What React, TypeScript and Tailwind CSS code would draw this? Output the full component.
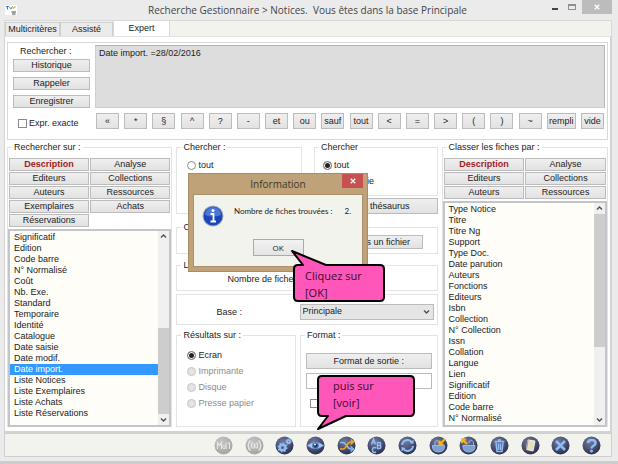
import type { ReactNode } from "react";

const operators = ["«", "*", "§", "^", "?", "-", "et", "ou", "sauf", "tout", "<", "=", ">", "(", ")", "~"];

const searchFields = [
  "Significatif", "Edition", "Code barre", "N° Normalisé", "Coût", "Nb. Exe.", "Standard", "Temporaire",
  "Identité", "Catalogue", "Date saisie", "Date modif.", "Date import.", "Liste Notices",
  "Liste Exemplaires", "Liste Achats", "Liste Réservations",
];

const sortFields = [
  "Type Notice", "Titre", "Titre Ng", "Support", "Type Doc.", "Date parution", "Auteurs", "Fonctions",
  "Editeurs", "Isbn", "Collection", "N° Collection", "Issn", "Collation", "Langue", "Lien",
  "Significatif", "Edition", "Code barre", "N° Normalisé", "Coût",
];

function Btn({ children, className = "" }: { children: ReactNode; className?: string }) {
  return (
    <button
      type="button"
      className={`flex items-center justify-center whitespace-nowrap border border-[#bcbcbc] bg-linear-to-b from-[#efefef] to-[#e2e2e2] leading-none ${className}`}
    >
      {children}
    </button>
  );
}

function Group({ title, children, className = "" }: { title: string; children?: ReactNode; className?: string }) {
  return (
    <fieldset className={`min-w-0 border border-[#e4e4e4] ${className}`}>
      <legend className="ml-1 px-0.5 leading-3">{title}</legend>
      {children}
    </fieldset>
  );
}

function Radio({ name, label, checked, disabled }: { name: string; label: string; checked?: boolean; disabled?: boolean }) {
  return (
    <label className={`flex h-4 items-center gap-0.5 ${disabled ? "text-[#8c8c8c]" : ""}`}>
      <input
        type="radio"
        name={name}
        defaultChecked={checked}
        disabled={disabled}
        className="size-[9px] shrink-0 appearance-none rounded-full border border-[#8a8a8a] bg-white checked:bg-[#222] checked:shadow-[inset_0_0_0_1px_white] disabled:border-[#c4c4c4] disabled:bg-[#e4e4e4]"
      />
      {label}
    </label>
  );
}

function Arrow({ down }: { down?: boolean }) {
  return (
    <svg viewBox="0 0 11 11" className="size-[11px] shrink-0">
      <path d={down ? "M3 4.5 5.5 7 8 4.5" : "M3 6.5 5.5 4 8 6.5"} fill="none" stroke="#505050" strokeWidth="1.4" />
    </svg>
  );
}

function ListBox({ label, items, selected, bottom }: { label: string; items: string[]; selected?: string; bottom?: boolean }) {
  return (
    <div className="flex h-0 grow border-2 border-[#c3c5cb] bg-[#fefdf8]">
      <select
        aria-label={label}
        size={20}
        defaultValue={selected}
        className="h-full min-w-0 grow appearance-none overflow-hidden bg-transparent py-px outline-none"
      >
        {items.map((item) => (
          <option
            key={item}
            className="block h-[11px] min-h-0 p-0 pl-1 leading-[11px] checked:bg-linear-to-r checked:from-[#3399ff] checked:to-[#3399ff] checked:[-webkit-text-fill-color:white]"
          >
            {item}
          </option>
        ))}
      </select>
      <div className="flex w-[11px] shrink-0 flex-col bg-[#f0f0f0]">
        <Arrow />
        <div className={`flex grow flex-col ${bottom ? "justify-end" : ""}`}>
          <div className={`bg-[#cdcdcd] ${bottom ? "h-1/2" : "h-2/3"}`} />
        </div>
        <Arrow down />
      </div>
    </div>
  );
}

function Orb({ label, disabled, children }: { label: string; disabled?: boolean; children: ReactNode }) {
  return (
    <button type="button" aria-label={label} disabled={disabled} className="size-[19px]">
      <svg viewBox="0 0 38 38" className="size-full" fill="none" stroke={disabled ? "#e6e6e6" : "#8fbcf5"} strokeWidth="3">
        <circle cx="19" cy="19" r="18" fill={disabled ? "url(#orbGrey)" : "url(#orbBlue)"} stroke="none" />
        {children}
      </svg>
    </button>
  );
}

function Toolbar() {
  return (
    <div className="flex h-6 items-center justify-end border border-[#cfcfcf] bg-[#f3f3ee] pr-2.5">
      <svg className="size-0" aria-hidden="true">
        <defs>
          <radialGradient id="orbBlue" cx="0.4" cy="0.3" r="0.75">
            <stop offset="0" stopColor="#737a9c" />
            <stop offset="0.6" stopColor="#464d6e" />
            <stop offset="1" stopColor="#262b45" />
          </radialGradient>
          <radialGradient id="orbGrey" cx="0.4" cy="0.3" r="0.75">
            <stop offset="0" stopColor="#c4c4c4" />
            <stop offset="1" stopColor="#a2a2a2" />
          </radialGradient>
        </defs>
      </svg>
      <div className="flex w-[387px] justify-between">
        <Orb label="Mots" disabled>
          <path d="M7 26V13l4 6 4-6v13M24 13v13M31 13v13M28 15l3-2" strokeWidth="2.4" />
          <circle cx="20" cy="22" r="3" strokeWidth="2" />
        </Orb>
        <Orb label="Diffuser" disabled>
          <path d="M11 9c-6 5-6 15 0 20M27 9c6 5 6 15 0 20M15 13c-3 3-3 9 0 12M23 13c3 3 3 9 0 12" />
          <path d="M19 15v10" strokeWidth="4" />
        </Orb>
        <Orb label="Paramètres">
          <circle cx="15" cy="23" r="5.5" strokeWidth="5" />
          <circle cx="15" cy="23" r="8.5" strokeDasharray="3.3 3.3" />
          <circle cx="27" cy="11" r="3" strokeWidth="4" />
          <circle cx="27" cy="11" r="5.5" strokeWidth="2" strokeDasharray="2.4 2.3" />
        </Orb>
        <Orb label="Voir">
          <path d="M3 19q16-12 32 0q-16 12-32 0Z" fill="#a9c9f2" strokeWidth="1.5" />
          <circle cx="19" cy="19" r="5.500" fill="#26305a" stroke="#4f7fd0" strokeWidth="2.5" />
          <circle cx="18" cy="17" r="1.8" fill="white" stroke="none" />
        </Orb>
        <Orb label="Mélanger">
          <path d="M6 13h6c7 0 8 13 15 13h5" />
          <path d="M6 26h6c8 0 7-14 15-14h5M27 7l6 5-6 5" stroke="#f2a922" />
          <path d="m27 21 6 5-6 5" />
        </Orb>
        <Orb label="Alphabet">
          <path d="m9 17 4-11 4 11M10 13h6M21 13v12h4q4-1 2-6h-6 4q4-1 1-6ZM18 24q-7-3-7 4t7 4" />
        </Orb>
        <Orb label="Actualiser">
          <path d="M8 18a11 11 0 0 1 20-5M30 20a11 11 0 0 1-20 5" strokeWidth="4" />
          <path d="m23 14 8 2 0-9ZM15 24l-8-2 0 9Z" fill="#8fbcf5" stroke="none" />
        </Orb>
        <Orb label="Déposer au panier">
          <path d="M7 19h24q1 13-12 13T7 19Z" fill="#7f9fd0" strokeWidth="2" />
          <path d="M12 19C10 8 18 5 18 13" strokeWidth="2" />
          <path d="M32 6 22 16M21 9v8h8" stroke="#f5b51c" strokeWidth="4" />
        </Orb>
        <Orb label="Retirer du panier">
          <path d="M8 19h24q1 13-12 13T8 19Z" fill="#7f9fd0" strokeWidth="2" />
          <path d="M29 18C30 7 21 5 20 14" strokeWidth="2" />
          <path d="M6 7l10 9M6 14V7h8" stroke="#f5b51c" strokeWidth="4" />
        </Orb>
        <Orb label="Supprimer">
          <path d="M9 11h20M16 8h6M12 13l2 18h10l2-18M17 15v13M21 15v13" />
        </Orb>
        <Orb label="Effacer">
          <path d="m14 8 14 2-4 20-13-3Z" fill="#e6dfc4" stroke="#f4f0dc" strokeWidth="2" />
          <path d="m14 8-3 19" stroke="#a39a7c" strokeWidth="2" />
        </Orb>
        <Orb label="Fermer">
          <path d="m10 10 18 18M28 10 10 28" strokeWidth="5" />
        </Orb>
        <Orb label="Aide">
          <path d="M12 14c0-8 15-8 15 0 0 6-8 5-8 11" strokeWidth="5" />
          <circle cx="19" cy="30" r="1.5" />
        </Orb>
      </div>
    </div>
  );
}

function CategoryButtons({ items }: { items: string[] }) {
  return (
    <div className="grid grid-cols-2 gap-px px-px">
      {items.map((item, i) => (
        <Btn key={item} className={`h-[13px] ${i === 0 ? "font-bold text-[#a01c1c]" : ""}`}>
          {item}
        </Btn>
      ))}
    </div>
  );
}

function Dialog() {
  return (
    <div
      role="dialog"
      aria-label="Information"
      className="absolute top-[173px] left-[188px] w-[180px] border border-[#a88d63] bg-[#bfa277] px-1 pb-1 font-['Open_Sans',sans-serif]"
    >
      <div className="relative flex h-5 items-center justify-center text-[10px] text-[#40382c]">
        Information
        <button type="button" aria-label="Fermer" className="absolute top-0 right-0 flex h-3.5 w-[21px] items-center justify-center bg-[#c75050]">
          <svg viewBox="0 0 8 8" className="size-1.5">
            <path d="m1 1 6 6M7 1 1 7" stroke="white" strokeWidth="1.6" />
          </svg>
        </button>
      </div>
      <div className="flex h-[73px] flex-col items-center border border-[#ab9069] bg-[#f3f3ee] pt-2.5">
        <div className="flex w-full gap-2.5 pl-2">
          <svg viewBox="0 0 22 22" className="size-[22px] shrink-0">
            <circle cx="11" cy="11" r="10.5" fill="#a9adb8" />
            <circle cx="11" cy="11" r="9.500" fill="#1b46b8" />
            <path d="M3 10a8 8 0 0 1 16 0q-8 3-16 0Z" fill="#5c8be6" opacity="0.7" />
            <circle cx="11" cy="5.500" r="1.6" fill="white" />
            <path d="M8.500 9h3v7.500M8.500 16.500h5.500" stroke="white" strokeWidth="1.8" fill="none" />
          </svg>
          <p className="flex gap-3 pt-0.5 font-[Lato,sans-serif] text-[8px] leading-2 text-[#222]">
            <span>Nombre de fiches trouvées :</span>
            <span>2.</span>
          </p>
        </div>
        <button type="button" className="mt-3 h-[17px] w-[51px] border border-[#7eb4ea] bg-linear-to-b from-[#f2f2f2] to-[#e4e4e4] text-[8px] leading-none">
          OK
        </button>
      </div>
    </div>
  );
}

export default function App() {
  return (
    <div className="relative border-b-[3px] border-[#cdcdcd] bg-[#ebebeb] pb-1 pr-1.5 pl-1 font-['Liberation_Sans',Arial,sans-serif] text-[9px] leading-3 text-[#222]">
      <header className="flex h-5 items-center">
        <svg viewBox="0 0 12 10" className="ml-px h-2.5 w-3 bg-white" fill="none">
          <path d="M1 1.5h3M2.5 1.5v3" stroke="#3a78b8" />
          <path d="m4.500 2 1.500 2 1.500-2.500" stroke="#4a9c5a" />
          <path d="M8 3.500 10.500 1.500" stroke="#e0b030" strokeWidth="1.500" />
          <path d="M6.500 7h4.500M7 9h3.500" stroke="#444" />
        </svg>
        <h1 className="grow pl-[46px] text-center font-['Open_Sans',sans-serif] text-[10px] whitespace-pre text-[#444]">
          Recherche Gestionnaire &gt; Notices.  Vous êtes dans la base Principale
        </h1>
        <div className="flex items-center gap-2.5 self-start">
          <button type="button" aria-label="Réduire" className="mt-1 h-0.5 w-1.5 bg-[#444]" />
          <button type="button" aria-label="Agrandir" className="h-[6px] w-2 border border-t-2 border-[#8f8f8f]" />
          <button type="button" aria-label="Fermer" className="-ml-1 flex h-3.5 w-[30px] items-center justify-center bg-[#bcbcbc]">
            <svg viewBox="0 0 8 8" className="size-1.5">
              <path d="m1 1 6 6M7 1 1 7" stroke="white" strokeWidth="1.8" />
            </svg>
          </button>
        </div>
      </header>

      <nav className="flex h-4 items-end border border-b-0 border-[#d9d9d9] bg-[#f3f3ee]">
        <button type="button" className="h-3.5 w-[55px] border border-b-0 border-[#cfcfcf] bg-[#ebebeb] leading-none">Multicritères</button>
        <button type="button" className="h-3.5 w-[53px] border border-b-0 border-[#cfcfcf] bg-[#ebebeb] leading-none">Assisté</button>
        <button type="button" className="h-4 w-[57px] border border-b-0 border-[#d9d9d9] bg-white leading-none">Expert</button>
      </nav>

      <main className="border-t border-r-2 border-b-2 border-l border-[#d3d3d3] border-t-[#e4e4e4] bg-white px-0.5 pt-[5px] pb-1">
        <section className="border border-[#d8d8d8] pt-0.5 pr-0.5 pb-2.5 pl-[5px]">
          <div className="flex gap-[5px]">
            <div className="flex w-[77px] shrink-0 flex-col gap-[5px]">
              <span className="-mb-1 pl-[7px] leading-[13px]">Rechercher :</span>
              <Btn className="h-[13px]">Historique</Btn>
              <Btn className="h-[13px]">Rappeler</Btn>
              <Btn className="h-[13px]">Enregistrer</Btn>
            </div>
            <textarea
              aria-label="Expression de recherche"
              readOnly
              defaultValue="Date import. =28/02/2016"
              className="grow resize-none border border-t-[#b5b5b5] border-r-[#b5b5b5] border-b-[#cfcfcf] border-l-[#cfcfcf] bg-[#dddddd] px-[3px] py-px leading-3 outline-none"
            />
          </div>
          <div className="mt-[5px] flex gap-[5px] pr-px">
            <label className="flex w-[77px] shrink-0 items-center gap-0.5 pt-1 pl-[5px]">
              <input type="checkbox" className="size-[9px] appearance-none border border-[#8a8a8a] bg-white" />
              Expr. exacte
            </label>
            <div className="flex grow justify-between pl-px">
              {operators.map((op) => (
                <Btn key={op} className="h-4 w-[23px]">{op}</Btn>
              ))}
              <Btn className="h-4 w-[29px]">rempli</Btn>
              <Btn className="h-4 w-[23px]">vide</Btn>
            </div>
          </div>
        </section>

        <div className="mt-px grid grid-cols-[166fr_262fr_167fr] gap-1">
          <Group title="Rechercher sur :" className="flex flex-col border-b-0">
            <div className="flex grow flex-col gap-0.5 pt-[5px]">
              <CategoryButtons
                items={["Description", "Analyse", "Editeurs", "Collections", "Auteurs", "Ressources", "Exemplaires", "Achats", "Réservations"]}
              />
              <ListBox label="Rechercher sur" items={searchFields} selected="Date import." bottom />
            </div>
          </Group>

          <div className="flex min-w-0 flex-col">
            <div className="grid grid-cols-[126fr_124fr] gap-3">
              <Group title="Chercher :" className="h-[73px]">
                <div className="px-2.5 pt-1">
                  <Radio name="scope" label="tout" />
                </div>
              </Group>
              <div>
                <Group title="Chercher" className="h-[55px]">
                  <div className="px-2 pt-1">
                    <Radio name="mode" label="tout" checked />
                    <Radio name="mode" label="une partie" />
                  </div>
                </Group>
                <Btn className="mt-0.5 h-4 w-full pl-7">thésaurus</Btn>
              </div>
            </div>
            <Group title="Chercher dans :" className="mt-[7px] h-[33px]">
              <Btn className="mt-0.5 mr-3.5 ml-auto h-3.5 w-[123px]">Chercher dans un fichier</Btn>
            </Group>
            <Group title="Limite :" className="mt-[5px] h-8">
              <p className="pt-0.5 pl-[50px]">Nombre de fiches :</p>
            </Group>
            <div className="mt-[3px] flex h-[31px] items-center border border-[#e4e4e4] pt-1 pr-[3px]">
              <label htmlFor="base" className="grow pl-[39px]">Base :</label>
              <div className="relative w-[134px]">
                <select id="base" className="block h-4 w-full appearance-none border border-[#bcbcbc] bg-[#e5e5e5] pl-0.5 leading-none">
                  <option>Principale</option>
                </select>
                <span className="pointer-events-none absolute top-0.5 right-0.5">
                  <Arrow down />
                </span>
              </div>
            </div>
            <div className="mt-1 grid grid-cols-[119fr_137fr] gap-1">
              <Group title="Résultats sur :" className="h-[98px]">
                <div className="px-2.5 pt-1.5">
                  <Radio name="output" label="Ecran" checked />
                  <Radio name="output" label="Imprimante" disabled />
                  <Radio name="output" label="Disque" disabled />
                  <Radio name="output" label="Presse papier" disabled />
                </div>
              </Group>
              <Group title="Format :">
                <div className="px-[5px] pt-3">
                  <Btn className="h-4 w-full">Format de sortie :</Btn>
                  <input type="text" aria-label="Format" className="mt-1 block h-4 w-full border border-[#bcbcbc] bg-white" />
                  <input type="checkbox" aria-label="Aperçu" className="mt-2.5 ml-1 block size-[9px] appearance-none border border-[#8a8a8a] bg-white" />
                </div>
              </Group>
            </div>
          </div>

          <Group title="Classer les fiches par :" className="flex flex-col border-b-0">
            <div className="flex grow flex-col gap-0.5 pt-[5px]">
              <CategoryButtons items={["Description", "Analyse", "Editeurs", "Collections", "Auteurs", "Ressources"]} />
              <ListBox label="Classer les fiches par" items={sortFields} />
            </div>
          </Group>
        </div>
      </main>

      <Toolbar />

      <Dialog />

      <div className="absolute top-[249px] left-[290px] h-[54px] w-24 pt-[18px] pl-[15px] font-['Open_Sans',sans-serif] text-[11px] leading-[17px] text-[#3a0b2c]">
        <svg viewBox="0 0 96 54" className="absolute inset-0 size-full">
          <path d="M2 2 36 16H90q4 0 4 4v28q0 4-4 4H8q-4 0-4-4V20q0-4 4-4h5Z" fill="#ff57b9" stroke="black" strokeWidth="2" strokeLinejoin="round" />
        </svg>
        <p className="relative whitespace-nowrap">Cliquez sur<br />[OK]</p>
      </div>

      <div className="absolute top-[374px] left-[315px] h-[58px] w-[101px] pt-[3px] pl-[18px] font-['Open_Sans',sans-serif] text-[11px] leading-[17px] text-[#3a0b2c]">
        <svg viewBox="0 0 101 58" className="absolute inset-0 size-full">
          <path d="M7 2H95q4 0 4 4v32q0 4-4 4H31L3 55 13 42H7q-4 0-4-4V6q0-4 4-4Z" fill="#ff57b9" stroke="black" strokeWidth="2" strokeLinejoin="round" />
        </svg>
        <p className="relative whitespace-nowrap">puis sur<br />[voir]</p>
      </div>
    </div>
  );
}
